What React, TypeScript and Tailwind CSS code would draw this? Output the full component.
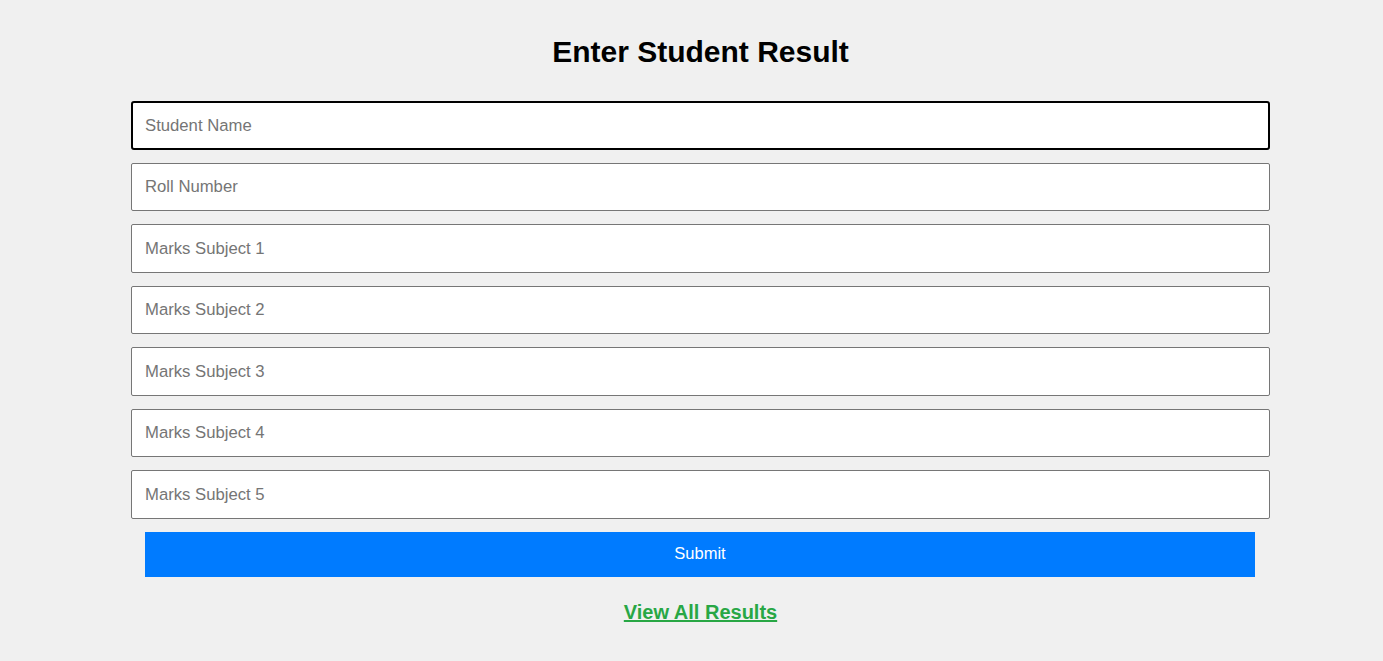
export default function App() {
  const fields = [
    "Roll Number",
    "Marks Subject 1",
    "Marks Subject 2",
    "Marks Subject 3",
    "Marks Subject 4",
    "Marks Subject 5",
  ];

  return (
    <div className="min-h-[661px] bg-[#f0f0f0] font-['Liberation_Sans',Arial,sans-serif]">
      <div className="ml-[131px] w-[1139px] pt-[35px]">
        <h1 className="text-center text-[30px] leading-[34px] font-bold text-black">
          Enter Student Result
        </h1>
        <form className="mt-[32px] flex flex-col gap-[13px]">
          <input
            type="text"
            autoFocus
            placeholder="Student Name"
            className="h-[48.5px] w-full rounded-[3px] border-2 border-black bg-white px-[12px] pt-[1px] text-[16.7px] text-black caret-black outline-none placeholder:text-[#757575]"
          />
          {fields.map((f) => (
            <input
              key={f}
              type="text"
              placeholder={f}
              className="h-[48.5px] w-full rounded-[2px] border border-[#767676] bg-white px-[13px] pt-[1px] text-[16.7px] text-black outline-none placeholder:text-[#757575]"
            />
          ))}
          <button
            type="button"
            className="ml-[14px] mr-[15px] mt-[0.5px] h-[45px] bg-[#007bff] pb-[3px] text-[16.5px] text-white"
          >
            Submit
          </button>
        </form>
        <div className="mt-[24px] text-center">
          <a href="#" className="text-[20px] leading-[23px] font-bold text-[#28a745] underline">
            View All Results
          </a>
        </div>
      </div>
    </div>
  );
}
